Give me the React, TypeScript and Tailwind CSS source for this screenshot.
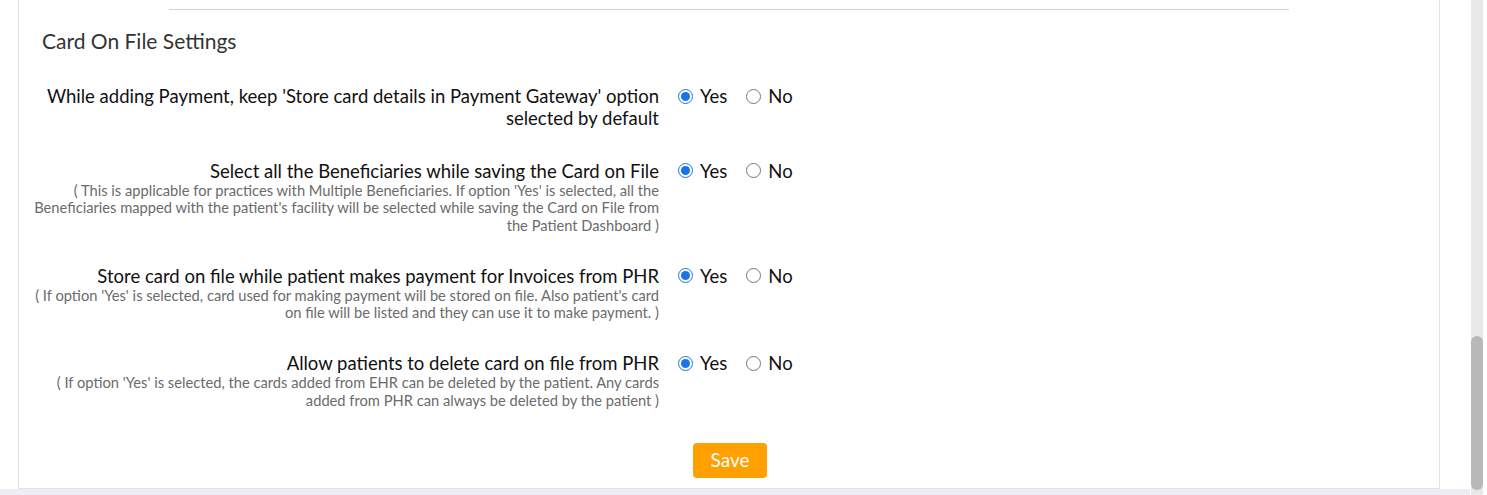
import React, { useState } from 'react';

interface Setting {
  id: string;
  label: React.ReactNode;
  note?: string;
}

const SETTINGS: Setting[] = [
  {
    id: 'storeDefault',
    label: (
      <>
        While adding Payment, keep 'Store card details in Payment Gateway' option
        <br />
        selected by default
      </>
    ),
  },
  {
    id: 'allBeneficiaries',
    label: 'Select all the Beneficiaries while saving the Card on File',
    note: "( This is applicable for practices with Multiple Beneficiaries. If option 'Yes' is selected, all the Beneficiaries mapped with the patient's facility will be selected while saving the Card on File from the Patient Dashboard )",
  },
  {
    id: 'storePhr',
    label: 'Store card on file while patient makes payment for Invoices from PHR',
    note: "( If option 'Yes' is selected, card used for making payment will be stored on file. Also patient's card on file will be listed and they can use it to make payment. )",
  },
  {
    id: 'deletePhr',
    label: 'Allow patients to delete card on file from PHR',
    note: "( If option 'Yes' is selected, the cards added from EHR can be deleted by the patient. Any cards added from PHR can always be deleted by the patient )",
  },
];

function YesNo({ name, value, onChange }: { name: string; value: boolean; onChange: (v: boolean) => void }) {
  return (
    <div className="flex items-center gap-[19px] text-[18.5px] leading-[22px] text-[#111]">
      <label className="flex items-center gap-[7px]">
        <input
          type="radio"
          name={name}
          checked={value}
          onChange={() => onChange(true)}
          className="w-[15px] h-[15px] m-0 accent-[#1a73e8]"
        />
        Yes
      </label>
      <label className="flex items-center gap-[7px]">
        <input
          type="radio"
          name={name}
          checked={!value}
          onChange={() => onChange(false)}
          className="w-[15px] h-[15px] m-0 accent-[#1a73e8]"
        />
        No
      </label>
    </div>
  );
}

export default function App() {
  const [values, setValues] = useState<Record<string, boolean>>({
    storeDefault: true,
    allBeneficiaries: true,
    storePhr: true,
    deletePhr: true,
  });

  return (
    <div
      className="flex h-[495px] w-full overflow-hidden bg-white"
      style={{ fontFamily: 'Lato, "Open Sans", Arial, sans-serif' }}
    >
      <div className="flex flex-1 flex-col">
        <div className="flex flex-1 pl-[18px] pr-[30px]">
          <div className="flex flex-1 flex-col border-x border-b border-[#e3e3e3] bg-white">
            <div className="mx-[150px] mt-[9px] h-px bg-[#d4d4d4]" />
            <h2 className="mt-[18px] ml-[23px] text-[21px] leading-[26px] text-[#333]">Card On File Settings</h2>

            <div className="mt-[31px] flex flex-col gap-[30.5px]">
              {SETTINGS.map(s => (
                <div key={s.id} className="flex items-start">
                  <div className="w-[640px] shrink-0 text-right">
                    <div className="text-[18.5px] leading-[22px] text-[#111]">{s.label}</div>
                    {s.note && (
                      <div className="pl-[4px] text-[14.7px] leading-[17.5px] text-[#6b6b6b]">{s.note}</div>
                    )}
                  </div>
                  <div className="ml-[19px]">
                    <YesNo
                      name={s.id}
                      value={values[s.id]}
                      onChange={v => setValues(prev => ({ ...prev, [s.id]: v }))}
                    />
                  </div>
                </div>
              ))}
            </div>

            <div className="mt-[34px] flex justify-center pl-[2px]">
              <button className="h-[35px] w-[74px] rounded-[4px] bg-[#ffa000] text-[19px] text-white">Save</button>
            </div>
          </div>
        </div>
        <div className="h-[6px] bg-[#eceef1]" />
      </div>
      <div className="flex w-[17px] flex-col">
        <div className="ml-[1px] flex w-[12px] flex-1 flex-col bg-[#e8e8e8]">
          <div className="flex-1" />
          <div className="mb-[5px] h-[154px] rounded-full bg-[#b8b8b8]" />
        </div>
      </div>
    </div>
  );
}
